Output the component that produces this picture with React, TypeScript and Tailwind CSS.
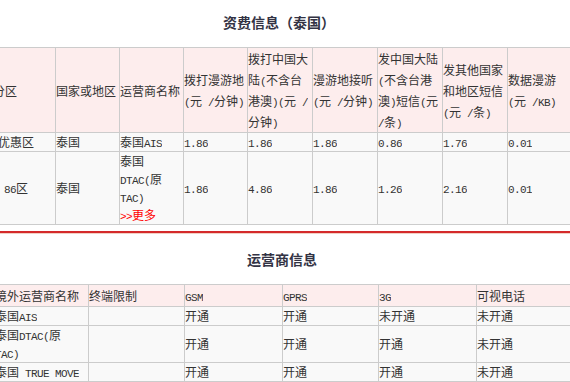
import React from 'react';

// ASCII runs get the narrow mono face, CJK stays in Noto
const T = ({ s }: { s: string }) => {
  const parts = s.split(/([\x20-\x7e]+)/).filter((p) => p !== '');
  return (
    <>
      {parts.map((p, i) =>
        /^[\x20-\x7e]+$/.test(p) ? (
          <span key={i} className="font-['Liberation_Mono'] text-[11px] tracking-[-0.6px] leading-[10px] whitespace-pre">
            {p}
          </span>
        ) : (
          <span key={i}>{p}</span>
        )
      )}
    </>
  );
};

const Lines = ({ lines, lh }: { lines: string[]; lh: string }) => (
  <div>
    {lines.map((l, i) => (
      <div key={i} className={`whitespace-nowrap overflow-hidden ${lh}`}>
        <T s={l} />
      </div>
    ))}
  </div>
);

const H = ({ lines, pad = '' }: { lines: string[]; pad?: string }) => (
  <div className={`bg-[#fdeded] flex items-center ${pad}`}>
    <Lines lines={lines} lh="h-[21px] leading-[21px]" />
  </div>
);

const C = ({ lines, pad = '' }: { lines: string[]; pad?: string }) => (
  <div className={`bg-[#f9f9f9] flex items-center ${pad}`}>
    <Lines lines={lines} lh="h-[18px] leading-[18px]" />
  </div>
);

const feeHead: string[][] = [
  ['国家或地区'],
  ['运营商名称'],
  ['拨打漫游地', '(元 /分钟)'],
  ['拨打中国大', '陆(不含台', '港澳)(元 /', '分钟)'],
  ['漫游地接听', '(元 /分钟)'],
  ['发中国大陆', '(不含台港', '澳)短信(元', '/条)'],
  ['发其他国家', '和地区短信', '(元 /条)'],
  ['数据漫游', '(元 /KB)'],
];

const carrierRows: string[][][] = [
  [['泰国AIS'], [], ['开通'], ['开通'], ['未开通'], ['未开通']],
  [['泰国DTAC(原', 'TAC)'], [], ['开通'], ['开通'], ['开通'], ['未开通']],
  [['泰国 TRUE MOVE'], [], ['开通'], ['开通'], ['开通'], ['未开通']],
];

export default function App() {
  return (
    <div className="w-[570px] h-[382px] overflow-hidden bg-white text-[12px] text-[#333333] font-['Noto_Sans_CJK_SC',sans-serif]">
      <div className="h-[47px] flex items-center justify-center pb-[3px] pr-[12px]">
        <h2 className="text-[14px] font-bold text-[#333344] leading-none">资费信息（泰国）</h2>
      </div>

      <div className="-ml-[40px] w-max grid grid-cols-[94px_63px_63px_63px_64px_64px_64px_64px_64px] gap-px bg-[#cccccc] border border-[#cccccc]">
        <H lines={['计费分区']} pad="pl-[8px]" />
        {feeHead.map((h, i) => (
          <H key={i} lines={h} />
        ))}

        <C lines={['非优惠区']} pad="pl-[25px]" />
        <C lines={['泰国']} />
        <C lines={['泰国AIS']} />
        <C lines={['1.86']} />
        <C lines={['1.86']} />
        <C lines={['1.86']} />
        <C lines={['0.86']} />
        <C lines={['1.76']} />
        <C lines={['0.01']} />

        <C lines={['86区']} pad="pl-[43px]" />
        <C lines={['泰国']} />
        <div className="bg-[#f9f9f9] flex items-center">
          <div>
            <div className="h-[18px] leading-[18px]">泰国</div>
            <div className="h-[18px] leading-[18px] whitespace-nowrap">
              <T s="DTAC(" />原
            </div>
            <div className="h-[18px] leading-[18px]">
              <T s="TAC)" />
            </div>
            <div className="h-[18px] leading-[18px] text-[#ff0000]">
              <T s=">>" />更多
            </div>
          </div>
        </div>
        <C lines={['1.86']} />
        <C lines={['4.86']} />
        <C lines={['1.86']} />
        <C lines={['1.26']} />
        <C lines={['2.16']} />
        <C lines={['0.01']} />
      </div>

      <div className="mt-[6px] border-t-2 border-t-[#d42a2a] border-b border-b-[#f3cfc4]" />

      <div className="h-[50px] flex items-center justify-center pr-[6px]">
        <h2 className="text-[14px] font-bold text-[#333344] leading-none">运营商信息</h2>
      </div>

      <div className="-ml-[6px] w-max grid grid-cols-[93px_95px_97px_95px_97px_97px] gap-px bg-[#cccccc] border border-[#cccccc]">
        <H lines={['境外运营商名称']} />
        <H lines={['终端限制']} />
        <H lines={['GSM']} />
        <H lines={['GPRS']} />
        <H lines={['3G']} />
        <H lines={['可视电话']} />
        {carrierRows.map((row, r) =>
          row.map((cell, c) => <C key={`${r}-${c}`} lines={cell} />)
        )}
      </div>
    </div>
  );
}
